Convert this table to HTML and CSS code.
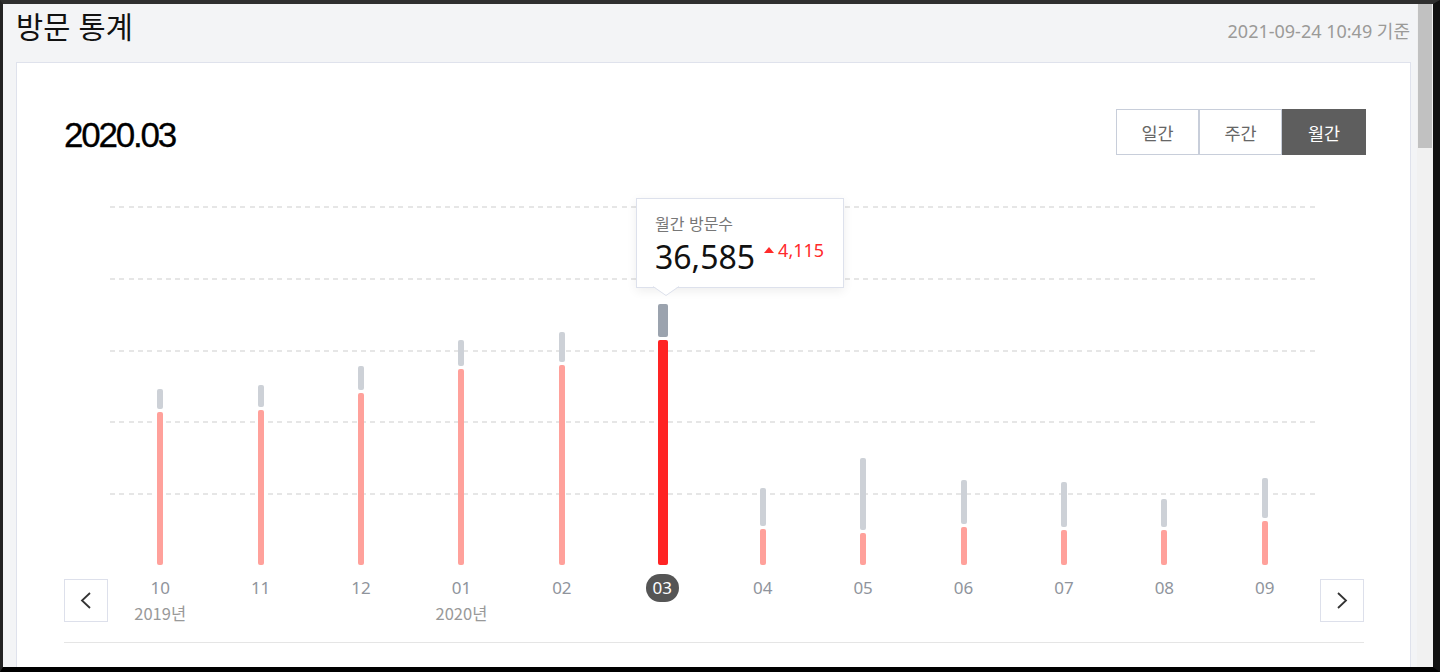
FILE: index.html
```html
<!DOCTYPE html>
<html lang="ko">
<head>
<meta charset="utf-8">
<title>방문 통계</title>
<link rel="stylesheet" href="styles.css">
</head>
<body>
<div class="frame">
  <div class="page">
    <header class="topbar">
      <h1 class="title">방문 통계</h1>
      <span class="stamp">2021-09-24 10:49 기준</span>
    </header>
    <section class="card">
      <div class="card-head">
        <h2 class="period">2020.03</h2>
        <div class="toggle">
          <button class="tg">일간</button>
          <button class="tg">주간</button>
          <button class="tg active">월간</button>
        </div>
      </div>

      <div class="plot">
        <div class="gridlines">
          <div class="band"></div><div class="band"></div><div class="band"></div><div class="band"></div><div class="band"></div>
        </div>
        <div class="bars">
          <div class="col"><span class="seg prev" style="height:20px"></span><span class="seg cur" style="height:153px"></span></div>
          <div class="col"><span class="seg prev" style="height:22px"></span><span class="seg cur" style="height:155px"></span></div>
          <div class="col"><span class="seg prev" style="height:24px"></span><span class="seg cur" style="height:172px"></span></div>
          <div class="col"><span class="seg prev" style="height:26px"></span><span class="seg cur" style="height:196px"></span></div>
          <div class="col"><span class="seg prev" style="height:30px"></span><span class="seg cur" style="height:200px"></span></div>
          <div class="col selected"><span class="seg prev" style="height:33px"></span><span class="seg cur" style="height:225px"></span></div>
          <div class="col"><span class="seg prev" style="height:38px"></span><span class="seg cur" style="height:36px"></span></div>
          <div class="col"><span class="seg prev" style="height:72px"></span><span class="seg cur" style="height:32px"></span></div>
          <div class="col"><span class="seg prev" style="height:44px"></span><span class="seg cur" style="height:38px"></span></div>
          <div class="col"><span class="seg prev" style="height:45px"></span><span class="seg cur" style="height:35px"></span></div>
          <div class="col"><span class="seg prev" style="height:28px"></span><span class="seg cur" style="height:35px"></span></div>
          <div class="col"><span class="seg prev" style="height:40px"></span><span class="seg cur" style="height:44px"></span></div>
        </div>
        <div class="tooltip">
          <div class="tip-label">월간 방문수</div>
          <div class="tip-row">
            <span class="tip-num">36,585</span>
            <span class="tip-delta"><svg class="tri" width="10" height="6" viewBox="0 0 10 6"><polygon points="5,0 10,6 0,6" fill="#ff2a2a"/></svg>4,115</span>
          </div>
          <svg class="tip-arrow" width="26" height="10" viewBox="0 0 26 10"><polygon points="0,0 13,9 26,0" fill="#fff"/><polyline points="0,0.5 13,9.5 26,0.5" fill="none" stroke="#dde1ec" stroke-width="1"/></svg>
        </div>
      </div>

      <div class="axis">
        <button class="nav" aria-label="이전"><svg width="12" height="17" viewBox="0 0 12 17"><polyline points="10,1 2,8.5 10,16" fill="none" stroke="#333" stroke-width="1.8"/></svg></button>
        <div class="labels">
          <div class="lab"><span class="m">10</span><span class="y">2019년</span></div>
          <div class="lab"><span class="m">11</span></div>
          <div class="lab"><span class="m">12</span></div>
          <div class="lab"><span class="m">01</span><span class="y">2020년</span></div>
          <div class="lab"><span class="m">02</span></div>
          <div class="lab"><span class="m active">03</span></div>
          <div class="lab"><span class="m">04</span></div>
          <div class="lab"><span class="m">05</span></div>
          <div class="lab"><span class="m">06</span></div>
          <div class="lab"><span class="m">07</span></div>
          <div class="lab"><span class="m">08</span></div>
          <div class="lab"><span class="m">09</span></div>
        </div>
        <button class="nav" aria-label="다음"><svg width="12" height="17" viewBox="0 0 12 17"><polyline points="2,1 10,8.5 2,16" fill="none" stroke="#333" stroke-width="1.8"/></svg></button>
      </div>
      <div class="rule"></div>
    </section>
  </div>
  <div class="scrollbar"><div class="thumb"></div></div>
</div>
</body>
</html>
```

FILE: styles.css
```css
* { box-sizing: border-box; }
html, body { margin: 0; padding: 0; }
body {
  background: #1e1e1e;
  font-family: "Noto Sans", "Noto Sans CJK KR", sans-serif;
  overflow: hidden;
}
.frame {
  width: 1440px;
  height: 672px;
  display: flex;
  border-top: 4px solid #2f2f2f;
  border-left: 3px solid #232323;
  border-right: 7px solid #111;
  border-bottom: 5px solid #000;
}
.page {
  flex: 1;
  min-width: 0;
  background: #f3f4f6;
  padding: 0 6px 0 13px;
  display: flex;
  flex-direction: column;
  overflow: hidden;
}
.scrollbar {
  width: 16px;
  background: #f1f1f1;
  padding: 0 1px;
}
.thumb {
  height: 144px;
  background: #c1c1c1;
}

.topbar {
  height: 58px;
  flex: none;
  display: flex;
  justify-content: space-between;
  align-items: baseline;
  padding-top: 1px;
}
.title {
  margin: 0;
  font-family: "Noto Sans CJK KR", sans-serif;
  font-size: 29.5px;
  font-weight: 400;
  line-height: 40px;
  color: #111;
}
.stamp {
  font-size: 18px;
  color: #9b9a98;
  padding-right: 1px;
}

.card {
  flex: 1;
  background: #fff;
  border: 1px solid #dfe2ec;
  border-bottom: none;
  padding: 46px 46px 0 47px;
}
.card-head {
  height: 46px;
  display: flex;
  justify-content: space-between;
}
.period {
  margin: 6px 0 0;
  font-family: "Liberation Sans", Arial, sans-serif;
  font-size: 35px;
  font-weight: 400;
  letter-spacing: -2.2px;
  line-height: 40px;
  color: #000;
  -webkit-text-stroke: 0.3px #000;
}
.toggle {
  display: flex;
  margin-right: -2px;
}
.tg {
  width: 83px;
  height: 46px;
  padding: 0;
  border: 1px solid #c8ceda;
  background: #fff;
  color: #666;
  font-family: "Noto Sans CJK KR", sans-serif;
  font-size: 17.5px;
}
.tg.active {
  width: 84px;
  background: #5e5e5e;
  border-color: #5e5e5e;
  color: #fff;
}

.plot {
  position: relative;
  display: grid;
  height: 359px;
  margin: 51px 49px 0 46px;
}
.gridlines, .bars { grid-area: 1 / 1; }
.gridlines {
  display: flex;
  flex-direction: column;
}
.band {
  flex: 1;
  background: repeating-linear-gradient(to right, #e6e6e6 0 5px, transparent 5px 9.3px) top left / 100% 2px no-repeat;
}
.bars {
  display: grid;
  grid-template-columns: repeat(12, 1fr);
  align-items: end;
}
.col {
  display: flex;
  flex-direction: column;
  align-items: center;
  gap: 3px;
}
.seg {
  display: block;
  width: 6px;
  border-radius: 2px;
}
.seg.prev { background: #cdd1d7; }
.seg.cur { background: #ffa19b; }
.col.selected { padding-left: 2px; }
.col.selected .seg { width: 10px; }
.col.selected .seg.prev { background: #9ba3ae; }
.col.selected .seg.cur { background: #ff2424; }

.tooltip {
  position: absolute;
  left: 526px;
  top: -8px;
  width: 208px;
  height: 90px;
  background: #fff;
  border: 1px solid #dde1ec;
  box-shadow: 0 3px 10px rgba(0, 0, 0, 0.07);
  padding: 15px 0 0 18px;
}
.tip-label {
  font-family: "Noto Sans CJK KR", sans-serif;
  font-size: 16px;
  line-height: 18px;
  color: #777;
}
.tip-row {
  display: flex;
  align-items: flex-start;
  margin-top: 3px;
}
.tip-num {
  font-size: 32px;
  line-height: 44px;
  color: #111;
}
.tip-delta {
  display: inline-flex;
  align-items: center;
  gap: 4px;
  margin: 5px 0 0 9px;
  font-size: 18px;
  line-height: 20px;
  color: #ff2a2a;
}
.tip-arrow {
  position: absolute;
  left: 16px;
  top: 100%;
  margin-top: -1px;
}

.axis {
  display: flex;
  margin-top: 9px;
}
.nav {
  flex: none;
  width: 44px;
  height: 43px;
  margin-top: 5px;
  padding: 0;
  border: 1px solid #dde0eb;
  background: #fff;
  display: flex;
  align-items: center;
  justify-content: center;
}
.labels {
  flex: 1;
  margin: 0 5px 0 2px;
  display: grid;
  grid-template-columns: repeat(12, 1fr);
}
.lab {
  display: flex;
  flex-direction: column;
  align-items: center;
}
.m {
  height: 28px;
  line-height: 28px;
  font-size: 17px;
  color: #8f949c;
  min-width: 33px;
  text-align: center;
  border-radius: 14px;
}
.m.active {
  background: #555;
  color: #fff;
}
.y {
  font-family: "Noto Sans CJK KR", sans-serif;
  font-size: 16.5px;
  line-height: 22px;
  color: #999;
}
.rule {
  margin-top: 18px;
  height: 1px;
  background: #e5e5e5;
}
```
